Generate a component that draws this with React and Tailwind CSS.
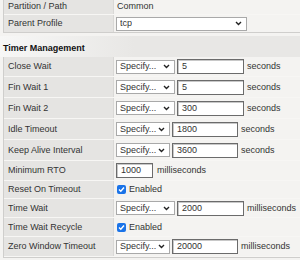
const chevron = (
  <svg width="7" height="5" viewBox="0 0 7 5" className="shrink-0">
    <path d="M1 1 L3.5 3.5 L6 1" fill="none" stroke="#222" strokeWidth="1.4" />
  </svg>
);

function Select({ w, label = "Specify..." }) {
  return (
    <div
      className={`flex items-center justify-between h-[14px] border border-[#a9a9a9] bg-white pl-[3px] pr-[4px] text-[#333] ${w}`}
    >
      <span className="truncate">{label}</span>
      {chevron}
    </div>
  );
}

function Input({ value, w }) {
  return (
    <div
      className={`flex items-center h-[15px] border border-[#6b6b6b] shadow-[inset_1px_1px_0_#c8c8c8] bg-white pl-[4px] text-[#333] ${w}`}
    >
      {value}
    </div>
  );
}

function Row({ label, h, children }) {
  return (
    <div className={`flex border-b border-[#f7f6f4] ${h}`}>
      <div className="w-[110px] shrink-0 bg-[#e5e4e2] border-r border-[#d9d8d6] flex items-center pl-[4px] text-[#333]">
        {label}
      </div>
      <div className="flex-1 flex items-center pl-[2px] gap-[2px] text-[#333]">{children}</div>
    </div>
  );
}

function Timer({ label, h, value, unit = "seconds", wide = true }) {
  return (
    <Row label={label} h={h}>
      <Select w={wide ? "w-[59px]" : "w-[54px]"} />
      <Input value={value} w={wide ? "w-[67px]" : "w-[66px]"} />
      <span className="ml-[1px]">{unit}</span>
    </Row>
  );
}

function Check({ label, h }) {
  return (
    <Row label={label} h={h}>
      <span className="ml-[1px] w-[9px] h-[9px] rounded-[2px] bg-[#1a73e8] flex items-center justify-center">
        <svg width="7" height="7" viewBox="0 0 7 7">
          <path d="M1 3.6 L2.8 5.3 L6 1.5" fill="none" stroke="#fff" strokeWidth="1.4" />
        </svg>
      </span>
      <span className="ml-[1px]">Enabled</span>
    </Row>
  );
}

export default function App() {
  return (
    <div className="w-[300px] h-[260px] overflow-hidden bg-[#f4f3f1] font-['Liberation_Sans',Arial,sans-serif] text-[9px] leading-none">
      <div className="-mt-[2px] ml-[3px] border-l border-b border-[#cfcecc]">
        <div className="flex h-[17px] border-b border-[#f7f6f4]">
          <div className="w-[110px] shrink-0 bg-[#e5e4e2] border-r border-[#d9d8d6] flex items-center pl-[4px] text-[#333]">
            Partition / Path
          </div>
          <div className="flex-1 flex items-center pl-[3px] text-[#333]">Common</div>
        </div>
        <div className="flex h-[17px]">
          <div className="w-[110px] shrink-0 bg-[#e5e4e2] border-r border-[#d9d8d6] flex items-center pl-[4px] text-[#333]">
            Parent Profile
          </div>
          <div className="flex-1 flex items-center pl-[2px]">
            <Select w="w-[131px]" label="tcp" />
          </div>
        </div>
      </div>

      <div className="mt-[3px] h-[21px] bg-[linear-gradient(90deg,#f7f7f6,#e8e7e5_45%)] flex items-end pb-[4px] pl-[3px] font-bold text-[#111]">
        Timer Management
      </div>

      <div className="ml-[3px] border-l border-b border-[#cfcecc]">
        <Timer label="Close Wait" h="h-[20px]" value="5" />
        <Timer label="Fin Wait 1" h="h-[21px]" value="5" />
        <Timer label="Fin Wait 2" h="h-[21px]" value="300" />
        <Timer label="Idle Timeout" h="h-[21px]" value="1800" wide={false} />
        <Timer label="Keep Alive Interval" h="h-[21px]" value="3600" wide={false} />
        <Row label="Minimum RTO" h="h-[20px]">
          <Input value="1000" w="w-[37px]" />
          <span className="ml-[2px]">milliseconds</span>
        </Row>
        <Check label="Reset On Timeout" h="h-[18px]" />
        <Timer label="Time Wait" h="h-[19px]" value="2000" unit="milliseconds" />
        <Check label="Time Wait Recycle" h="h-[19px]" />
        <Timer label="Zero Window Timeout" h="h-[20px]" value="20000" unit="milliseconds" wide={false} />
      </div>
    </div>
  );
}
